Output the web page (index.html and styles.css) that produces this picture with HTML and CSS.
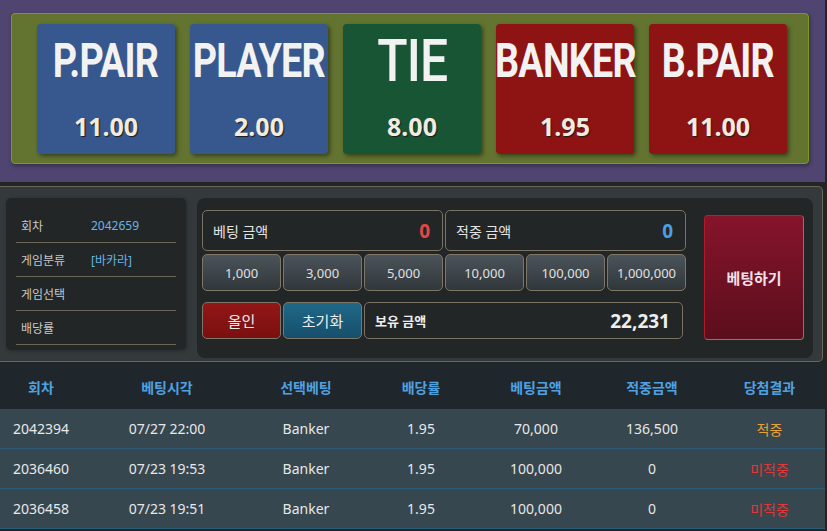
FILE: index.html
```html
<!DOCTYPE html>
<html>
<head>
  <title>Baccarat Betting</title>
  <link rel="stylesheet" href="styles.css">
</head>
<body>

<div class="page">
  <div class="odds-wrap">
    <div class="odds-panel">
      <div class="odds-card blue">
        <div class="odds-title"><span>P.PAIR</span></div>
        <div class="odds-rate">11.00</div>
      </div>
      <div class="odds-card blue">
        <div class="odds-title"><span>PLAYER</span></div>
        <div class="odds-rate">2.00</div>
      </div>
      <div class="odds-card green">
        <div class="odds-title big"><span>TIE</span></div>
        <div class="odds-rate">8.00</div>
      </div>
      <div class="odds-card red">
        <div class="odds-title"><span>BANKER</span></div>
        <div class="odds-rate">1.95</div>
      </div>
      <div class="odds-card red">
        <div class="odds-title"><span>B.PAIR</span></div>
        <div class="odds-rate">11.00</div>
      </div>
    </div>
  </div>

  <div class="bet-panel">
    <div class="info-card">
      <div class="info-row"><span class="info-label">회차</span><span class="info-value">2042659</span></div>
      <div class="info-row"><span class="info-label">게임분류</span><span class="info-value">[바카라]</span></div>
      <div class="info-row"><span class="info-label">게임선택</span><span class="info-value"></span></div>
      <div class="info-row"><span class="info-label">배당률</span><span class="info-value"></span></div>
    </div>

    <div class="bet-card">
      <div class="bet-grid">
        <div class="amount-box span3"><span>베팅 금액</span><b class="red-num">0</b></div>
        <div class="amount-box span3"><span>적중 금액</span><b class="blue-num">0</b></div>

        <button class="chip">1,000</button>
        <button class="chip">3,000</button>
        <button class="chip">5,000</button>
        <button class="chip">10,000</button>
        <button class="chip">100,000</button>
        <button class="chip">1,000,000</button>

        <button class="action allin">올인</button>
        <button class="action reset">초기화</button>
        <div class="amount-box span4 owned"><b>보유 금액</b><b class="owned-num">22,231</b></div>
      </div>
      <button class="bet-button">베팅하기</button>
    </div>
  </div>

  <table class="history">
    <colgroup>
      <col style="width: 82px">
      <col style="width: 170px">
      <col style="width: 108px">
      <col style="width: 122px">
      <col style="width: 108px">
      <col style="width: 124px">
      <col style="width: 111px">
    </colgroup>
    <thead>
      <tr>
        <th>회차</th>
        <th>베팅시각</th>
        <th>선택베팅</th>
        <th>배당률</th>
        <th>베팅금액</th>
        <th>적중금액</th>
        <th>당첨결과</th>
      </tr>
    </thead>
    <tbody>
      <tr>
        <td>2042394</td>
        <td>07/27 22:00</td>
        <td>Banker</td>
        <td>1.95</td>
        <td>70,000</td>
        <td>136,500</td>
        <td class="win">적중</td>
      </tr>
      <tr>
        <td>2036460</td>
        <td>07/23 19:53</td>
        <td>Banker</td>
        <td>1.95</td>
        <td>100,000</td>
        <td>0</td>
        <td class="lose">미적중</td>
      </tr>
      <tr>
        <td>2036458</td>
        <td>07/23 19:51</td>
        <td>Banker</td>
        <td>1.95</td>
        <td>100,000</td>
        <td>0</td>
        <td class="lose">미적중</td>
      </tr>
    </tbody>
  </table>
</div>

</body>
</html>
```

FILE: styles.css
```css
body {
  margin: 0;
  background-color: #222425;
  font-family: "Noto Sans", "Noto Sans CJK KR", sans-serif;
  color: #e6e6e6;
}

.page {
  width: 825px;
}

/* odds section */
.odds-wrap {
  background-color: #4f4570;
  height: 182px;
  box-sizing: border-box;
  padding: 13px 16px 0 11px;
}

.odds-panel {
  background-color: #637430;
  border: 1px solid #7c9a22;
  border-radius: 4px;
  box-shadow: 1px 2px 4px rgba(0, 0, 0, 0.35);
  height: 151px;
  box-sizing: border-box;
  padding: 10px 0 0 25px;
  display: flex;
  gap: 15px;
}

.odds-card {
  width: 138px;
  height: 130px;
  border-radius: 4px;
  box-shadow: 2px 2px 4px rgba(0, 0, 0, 0.45);
  display: flex;
  flex-direction: column;
  align-items: center;
}

.blue { background-color: #37588f; }
.green { background-color: #175535; }
.red { background-color: #8e1313; }

.odds-title {
  height: 70px;
  display: flex;
  justify-content: center;
  align-items: center;
  white-space: nowrap;
  font-family: "Roboto", sans-serif;
  font-weight: 700;
  font-size: 49px;
  color: #f2f2f2;
  letter-spacing: -1px;
}

.odds-title span {
  display: inline-block;
  transform: scaleX(0.77);
  margin-top: 2px;
}

.odds-title.big {
  font-size: 60px;
  font-weight: 500;
}

.odds-title.big span {
  transform: scaleX(0.83);
}

.odds-rate {
  margin-top: 15px;
  font-size: 25px;
  font-weight: 700;
  color: #f2ece0;
  text-shadow: 1px 1px 1px #1a1a1a;
}

/* bet section */
.bet-panel {
  margin-top: 4px;
  width: 823px;
  height: 176px;
  box-sizing: border-box;
  background-color: #343a3c;
  border: 1px solid #6b6656;
  border-left: none;
  border-radius: 0 5px 5px 0;
  padding: 11px 9px 0 6px;
  display: flex;
  gap: 11px;
  align-items: flex-start;
}

.info-card {
  width: 180px;
  height: 152px;
  box-sizing: border-box;
  background-color: #222627;
  border-radius: 5px;
  box-shadow: 1px 1px 4px rgba(0, 0, 0, 0.3);
  padding: 11px 10px 0;
}

.info-row {
  height: 33px;
  border-bottom: 1px solid #6b6656;
  display: flex;
  align-items: center;
  padding-left: 5px;
  font-size: 12px;
}

.info-label {
  width: 70px;
  color: #c8c8c8;
}

.info-value {
  color: #6ab4e6;
}

.bet-card {
  flex: 1;
  height: 160px;
  box-sizing: border-box;
  background-color: #222627;
  border-radius: 8px;
  padding: 12px 9px 0 5px;
  display: flex;
  gap: 18px;
}

.bet-grid {
  display: grid;
  grid-template-columns: repeat(6, 79px);
  grid-template-rows: 41px 37px 45px;
  column-gap: 2px;
  row-gap: 3px;
}

.span3 { grid-column: span 3; }
.span4 { grid-column: span 4; }

.amount-box {
  border: 1px solid #7a7262;
  border-radius: 5px;
  display: flex;
  justify-content: space-between;
  align-items: center;
  padding: 0 12px 0 10px;
  font-size: 14px;
  color: #e4e4e4;
}

.amount-box b {
  font-size: 19px;
}

.red-num { color: #e24848; }
.blue-num { color: #4c9fe2; }

.owned {
  height: 37px;
  box-sizing: border-box;
  align-self: end;
  margin-right: 3px;
}

.owned b:first-child {
  font-size: 13px;
  color: #eee;
}

.owned-num {
  color: #eee;
}

.chip,
.action {
  font-family: "Noto Sans", "Noto Sans CJK KR", sans-serif;
  border: 1px solid #7e7667;
  border-radius: 5px;
  color: #e0e0e0;
  padding: 0;
  cursor: pointer;
}

.chip {
  font-size: 13px;
  background: linear-gradient(#4b545a, #30373b);
}

.action {
  height: 37px;
  align-self: end;
  font-size: 15px;
  color: #ececec;
}

.allin {
  background: linear-gradient(#931616, #7a1010);
}

.reset {
  background: linear-gradient(#1f6888, #164f6b);
}

.bet-button {
  margin-top: 5px;
  width: 100px;
  height: 125px;
  border: 1px solid #8a7470;
  border-top-color: #c01a2c;
  border-left-color: #b01a2a;
  border-radius: 4px;
  background: linear-gradient(#86142b, #5b0e1d);
  color: #f2e2ea;
  font-family: "Noto Sans", "Noto Sans CJK KR", sans-serif;
  font-size: 15px;
  font-weight: 700;
  cursor: pointer;
}

/* history table */
.history {
  margin-top: 2px;
  width: 825px;
  border-collapse: collapse;
  table-layout: fixed;
}

.history th {
  height: 45px;
  background-color: #1f262c;
  color: #4fa2e2;
  font-size: 14px;
  font-weight: 700;
  text-align: center;
  padding: 0;
}

.history td {
  height: 39px;
  background-color: #37474f;
  border-bottom: 1px solid #2b5b78;
  text-align: center;
  font-size: 14px;
  color: #e8e8e8;
  padding: 0;
}

.history td.win { color: #e8a232; }
.history td.lose { color: #e03838; }
```
